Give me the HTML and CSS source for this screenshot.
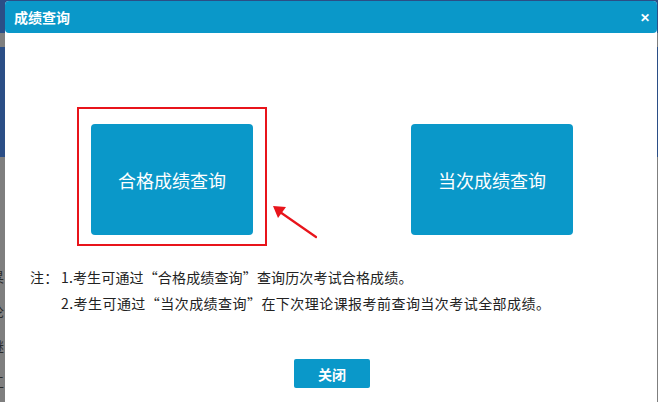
FILE: index.html
```html
<!DOCTYPE html>
<html lang="zh-CN">
<head>
<meta charset="utf-8">
<title>成绩查询</title>
<link rel="stylesheet" href="styles.css">
</head>
<body>
<div class="page">
  <div class="band band-blue band-a"></div>
  <div class="band band-gray band-b"></div>
  <div class="band band-blue band-c"></div>
  <div class="band band-gray band-d">
    <span class="frag">䊆</span>
    <span class="frag">论</span>
    <span class="frag">继</span>
    <span class="frag">工</span>
  </div>
</div>

<div class="modal">
  <div class="modal-header">
    <span class="modal-title">成绩查询</span>
    <span class="modal-x">✕</span>
  </div>
  <div class="modal-body">
    <div class="choices">
      <div class="choice-wrap">
        <div class="choice">合格成绩查询</div>
        <div class="highlight"></div>
      </div>
      <div class="choice-wrap">
        <div class="choice">当次成绩查询</div>
      </div>
    </div>
    <svg class="arrow" width="60" height="50" viewBox="0 0 60 50">
      <line x1="52" y1="40" x2="16" y2="15" stroke="#e8141b" stroke-width="2.2" stroke-linecap="round"/>
      <polygon points="9,9 22,10 14,21" fill="#e8141b"/>
    </svg>
    <div class="notes">
      <div class="note-line note-one"><span class="note-label">注：</span><span>1.考生可通过“合格成绩查询”查询历次考试合格成绩。</span></div>
      <div class="note-line note-two"><span class="note-label"></span><span>2.考生可通过“当次成绩查询”在下次理论课报考前查询当次考试全部成绩。</span></div>
    </div>
    <div class="actions">
      <button class="btn-close">关闭</button>
    </div>
  </div>
</div>
</body>
</html>
```

FILE: styles.css
```css
html, body {
  margin: 0;
  padding: 0;
  width: 658px;
  height: 402px;
  overflow: hidden;
  font-family: "Noto Sans CJK SC", "Noto Sans", sans-serif;
}

.page {
  display: flex;
  flex-direction: column;
  width: 658px;
  height: 402px;
}

.band { width: 100%; }
.band-blue { background: #2b4e86; }
.band-gray { background: #7f7f7f; }
.band-a { height: 33px; }
.band-b { height: 14px; }
.band-c { height: 110px; }
.band-d {
  flex: 1;
  display: flex;
  flex-direction: column;
  padding-top: 112px;
  gap: 21px;
}
.frag {
  font-size: 14px;
  line-height: 14px;
  color: #2a2a2a;
  margin-left: -10px;
}

.modal {
  position: absolute;
  left: 5px;
  top: 1px;
  width: 652px;
  height: 410px;
  background: #fff;
  border-radius: 4px 4px 0 0;
}

.modal-header {
  height: 32px;
  background: #0a98c9;
  border-radius: 4px;
  display: flex;
  align-items: center;
  justify-content: space-between;
  padding: 0 7px 0 9px;
  color: #fff;
}
.modal-title {
  font-size: 14px;
  font-weight: bold;
  line-height: 32px;
}
.modal-x {
  font-size: 12px;
  font-weight: bold;
  line-height: 32px;
}

.modal-body {
  position: relative;
}

.choices {
  display: flex;
  justify-content: center;
  gap: 158px;
  padding-top: 91px;
  padding-left: 2px;
}
.choice-wrap {
  position: relative;
}
.choice {
  width: 162px;
  height: 111px;
  background: #0a98c9;
  border-radius: 4px;
  color: #fff;
  font-size: 18px;
  display: flex;
  align-items: center;
  justify-content: center;
}
.highlight {
  position: absolute;
  left: -14px;
  right: -14px;
  top: -17px;
  bottom: -11px;
  border: 2px solid #e8141b;
  box-sizing: border-box;
}

.arrow {
  position: absolute;
  left: 259px;
  top: 164px;
}

.notes {
  padding: 29px 0 0 25px;
  font-size: 14px;
  color: #222;
}
.note-line {
  display: flex;
  height: 26px;
  line-height: 26px;
}
.note-one { letter-spacing: 0.15px; }
.note-two { letter-spacing: 0.45px; }
.note-label {
  width: 31px;
  flex: none;
}

.actions {
  display: flex;
  justify-content: center;
  padding-top: 43px;
  padding-left: 2px;
}
.btn-close {
  width: 76px;
  height: 29px;
  border: none;
  border-radius: 2px;
  background: #0a98c9;
  color: #fff;
  font-family: "Noto Sans CJK SC", sans-serif;
  font-size: 14px;
  font-weight: bold;
  padding: 0;
}
```
